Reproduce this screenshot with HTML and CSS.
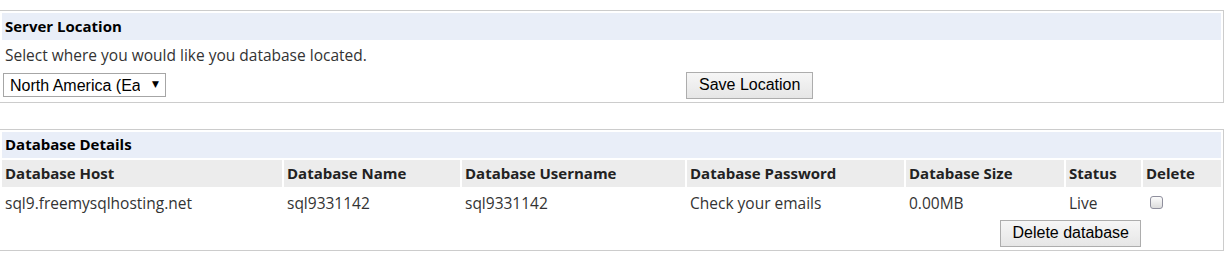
FILE: index.html
```html
<!DOCTYPE html>
<html lang="en">
<head>
    <meta charset="UTF-8">
    <title>Database Details</title>
    <link rel="stylesheet" href="styles.css">
</head>
<body>
    <table class="panel location">
        <colgroup>
            <col class="c-select">
            <col class="c-save">
        </colgroup>
        <tr>
            <th class="panel-title" colspan="2">Server Location</th>
        </tr>
        <tr>
            <td class="intro" colspan="2">Select where you would like you database located.</td>
        </tr>
        <tr class="location-row">
            <td class="select-cell">
                <span class="select-wrap">
                    <select class="region">
                        <option>North America (East)</option>
                        <option>Europe (West)</option>
                    </select>
                    <span class="select-arrow">&#9660;</span>
                </span>
            </td>
            <td class="btn-cell">
                <button class="btn">Save Location</button>
            </td>
        </tr>
    </table>

    <table class="panel details">
        <colgroup>
            <col class="c-host">
            <col class="c-name">
            <col class="c-user">
            <col class="c-pass">
            <col class="c-size">
            <col class="c-status">
            <col class="c-del">
        </colgroup>
        <tr>
            <th class="panel-title" colspan="7">Database Details</th>
        </tr>
        <tr class="cols">
            <th>Database Host</th>
            <th>Database Name</th>
            <th>Database Username</th>
            <th>Database Password</th>
            <th>Database Size</th>
            <th>Status</th>
            <th>Delete</th>
        </tr>
        <tr class="db-row">
            <td>sql9.freemysqlhosting.net</td>
            <td>sql9331142</td>
            <td>sql9331142</td>
            <td>Check your emails</td>
            <td>0.00MB</td>
            <td>Live</td>
            <td><input type="checkbox" class="check"></td>
        </tr>
        <tr class="action-row">
            <td colspan="6" class="action-cell"><button class="btn">Delete database</button></td>
            <td></td>
        </tr>
    </table>
</body>
</html>
```

FILE: styles.css
```css
body {
    margin: 0;
    padding: 10px 0 0 0;
    font-family: 'Open Sans', 'Noto Sans', sans-serif;
    font-size: 15.5px;
    color: #333;
    background: #fff;
}

.panel {
    width: 1225px;
    margin-left: -1px;
    border: 1px solid #ccc;
    border-spacing: 2px;
    table-layout: fixed;
}

.details {
    margin-top: 26px;
}

.panel th,
.panel td {
    padding: 0 3px;
    text-align: left;
    vertical-align: middle;
    white-space: nowrap;
    overflow: hidden;
}

.panel-title {
    height: 25px;
    background: #e9eef8;
    color: #000;
    font-weight: bold;
    font-size: 15px;
    padding-bottom: 2px !important;
}

.details .panel-title {
    height: 24px;
}

.intro {
    height: 25px;
    padding-bottom: 1px !important;
}

.location-row td {
    height: 30px;
}

.c-select { width: 682px; }

.select-cell {
    padding-left: 1px !important;
}

.btn-cell {
    padding-left: 0 !important;
}

.select-wrap {
    position: relative;
    display: inline-block;
}

.region {
    appearance: none;
    -webkit-appearance: none;
    width: 163px;
    height: 24px;
    padding: 0 25px 0 6px;
    border: 1px solid #a6a6a6;
    border-radius: 0;
    background: #fff;
    font-family: 'Liberation Sans', Arial, sans-serif;
    font-size: 16px;
    color: #000;
    display: block;
}

.select-arrow {
    position: absolute;
    right: 7px;
    top: 6px;
    font-size: 9px;
    color: #000;
    pointer-events: none;
    font-family: 'DejaVu Sans', sans-serif;
}

.btn {
    font-family: 'Liberation Sans', Arial, sans-serif;
    font-size: 16px;
    color: #000;
    height: 27px;
    padding: 0 12px;
    border: 1px solid #adadad;
    border-radius: 0;
    background: linear-gradient(#f6f6f6, #e6e6e6);
}

.cols th {
    height: 26px;
    background: #ececec;
    font-weight: bold;
    font-size: 15px;
    color: #222;
    padding-bottom: 1px !important;
}

.c-host { width: 280px; }
.c-name { width: 176px; }
.c-user { width: 223px; }
.c-pass { width: 217px; }
.c-size { width: 158px; }
.c-status { width: 75px; }
.c-del { width: 78px; }

.db-row td {
    height: 27px;
}

.check {
    appearance: none;
    -webkit-appearance: none;
    width: 13px;
    height: 13px;
    margin: 0 0 3px 4px;
    border: 1px solid #8f8f9d;
    border-radius: 3px;
    background: linear-gradient(#fcfcfc, #dcdcdc);
    vertical-align: middle;
}

.action-row td {
    height: 30px;
}

.action-cell {
    text-align: right !important;
    padding: 0 !important;
}

.action-cell .btn {
    height: 27px;
    padding: 0 11px;
}
```
